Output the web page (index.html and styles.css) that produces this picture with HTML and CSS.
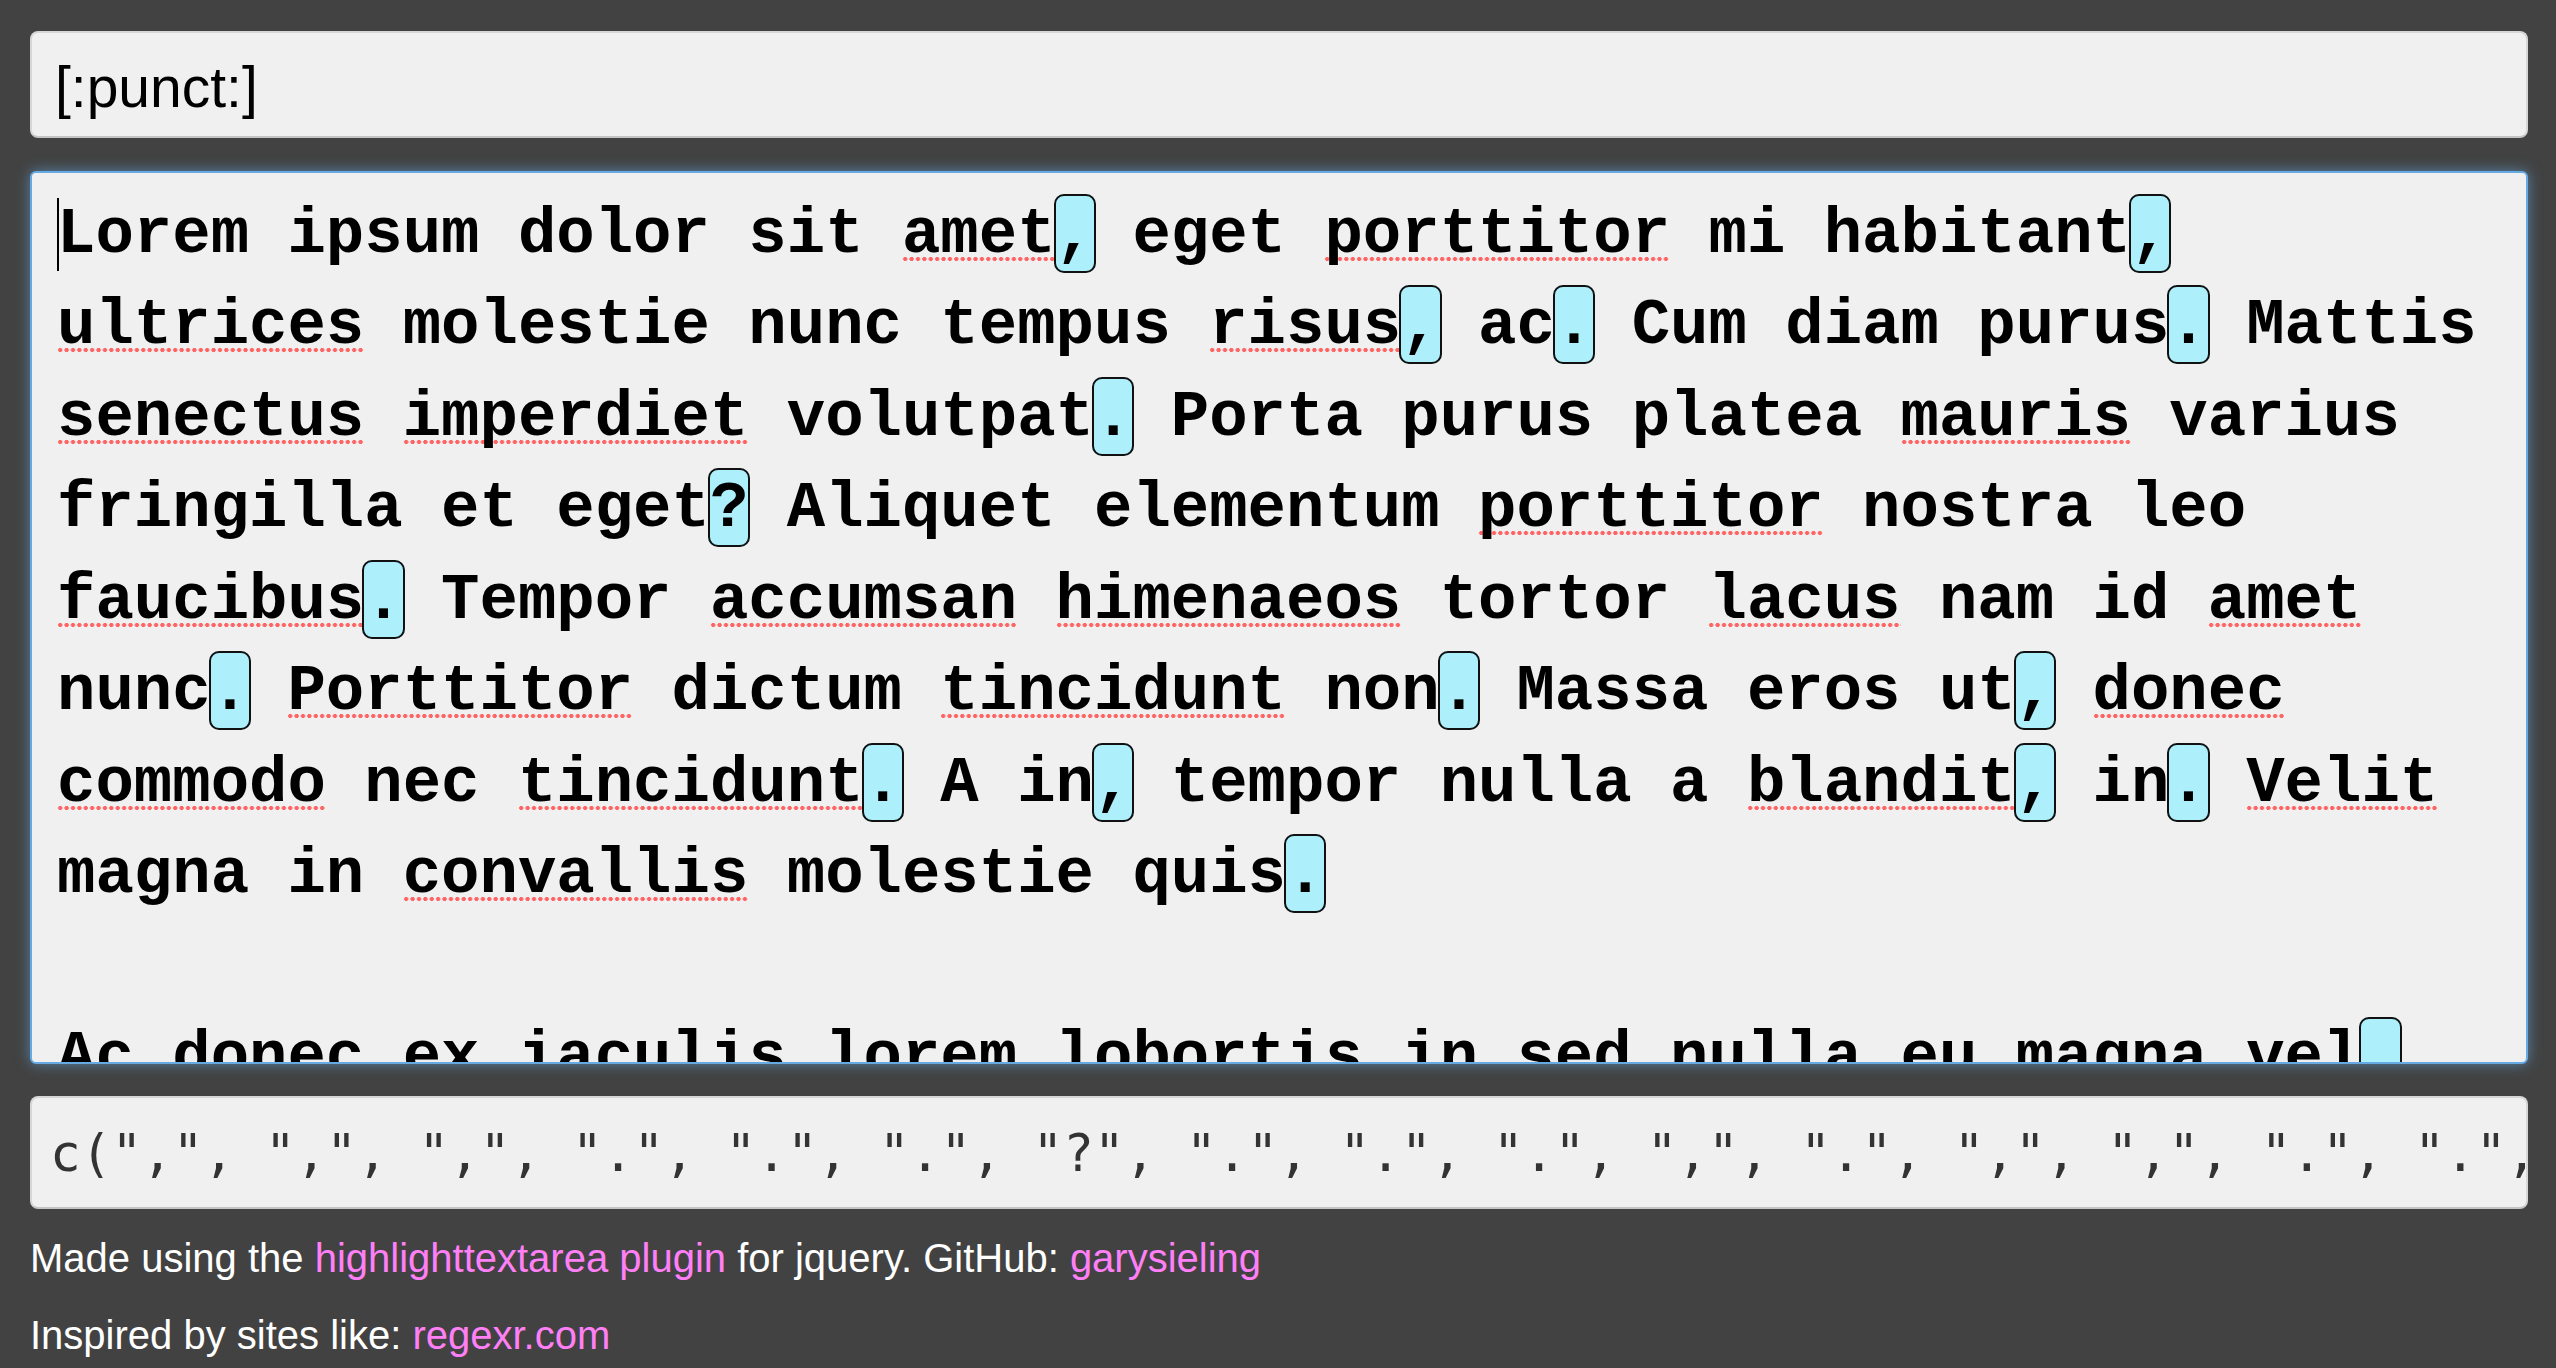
FILE: index.html
```html
<!DOCTYPE html>
<html lang="en">
<head>
<meta charset="utf-8">
<title>Regex tester</title>
<link rel="stylesheet" href="styles.css">
</head>
<body>
<div class="page">
  <div class="pattern">[:punct:]</div>
  <div class="editor"><span class="caret"></span>Lorem ipsum dolor sit <span class="sp">amet</span><mark class="hl">,</mark> eget <span class="sp">porttitor</span> mi habitant<mark class="hl">,</mark> <span class="sp">ultrices</span> molestie nunc tempus <span class="sp">risus</span><mark class="hl">,</mark> ac<mark class="hl">.</mark> Cum diam purus<mark class="hl">.</mark> Mattis <span class="sp">senectus</span> <span class="sp">imperdiet</span> volutpat<mark class="hl">.</mark> Porta purus platea <span class="sp">mauris</span> varius fringilla et eget<mark class="hl">?</mark> Aliquet elementum <span class="sp">porttitor</span> nostra leo <span class="sp">faucibus</span><mark class="hl">.</mark> Tempor <span class="sp">accumsan</span> <span class="sp">himenaeos</span> tortor <span class="sp">lacus</span> nam id <span class="sp">amet</span> nunc<mark class="hl">.</mark> <span class="sp">Porttitor</span> dictum <span class="sp">tincidunt</span> non<mark class="hl">.</mark> Massa eros ut<mark class="hl">,</mark> <span class="sp">donec</span> <span class="sp">commodo</span> nec <span class="sp">tincidunt</span><mark class="hl">.</mark> A in<mark class="hl">,</mark> tempor nulla a <span class="sp">blandit</span><mark class="hl">,</mark> in<mark class="hl">.</mark> <span class="sp">Velit</span> magna in <span class="sp">convallis</span> molestie quis<mark class="hl">.</mark><br><br>Ac donec ex iaculis lorem lobortis in sed nulla eu magna vel<mark class="hl">.</mark> Nisi tellus aliquam orci<mark class="hl">,</mark> sed a vitae.</div>
  <div class="output">c(",", ",", ",", ".", ".", ".", "?", ".", ".", ".", ",", ".", ",", ",", ".", ".", ".", ",", ".")</div>
  <p class="note">Made using the <a href="#">highlighttextarea plugin</a> for jquery. GitHub: <a href="#">garysieling</a></p>
  <p class="note note-second">Inspired by sites like: <a href="#">regexr.com</a></p>
</div>
</body>
</html>
```
FILE: styles.css
```css
html, body {
  margin: 0;
  padding: 0;
}

body {
  background: #424242;
  font-family: "Liberation Sans", Arial, sans-serif;
}

.page {
  display: flex;
  flex-direction: column;
  padding: 31px 28px 0 30px;
}

.pattern {
  box-sizing: border-box;
  height: 107px;
  display: flex;
  align-items: center;
  padding: 4px 23px 0;
  background: #f0f0f0;
  border: 2px solid #d6d6d6;
  border-bottom-color: #c4c4c4;
  border-radius: 8px;
  font-size: 57px;
  color: #000;
}

.editor {
  box-sizing: border-box;
  margin-top: 33px;
  height: 893px;
  padding: 17px 25px 0 25px;
  overflow: hidden;
  background: #f0f0f0;
  border: 2px solid #67a9e3;
  border-radius: 6px;
  box-shadow: 0 0 14px rgba(102, 175, 233, 0.6);
  font-family: "Liberation Mono", "Courier New", monospace;
  font-size: 64px;
  font-weight: bold;
  line-height: 91.43px;
  color: #000;
  white-space: normal;
}

.caret {
  display: inline-block;
  width: 2px;
  height: 73px;
  margin-right: -2px;
  vertical-align: -19px;
  background: #000;
}

.hl {
  background: #aeeffc;
  color: #000;
  border: 2px solid #111;
  border-radius: 10px;
  margin: 0 -2px;
  padding: 3px 0 0;
}

.sp {
  background-image: radial-gradient(circle at center, #ff6464 0, #ff6464 1.8px, rgba(255, 100, 100, 0) 2.4px);
  background-size: 6.4px 6px;
  background-repeat: repeat-x;
  background-position: 0 calc(100% - 9px);
}

.output {
  margin-top: 32px;
  padding: 26px 18px 24px;
  overflow: hidden;
  white-space: pre;
  background: #f0f0f0;
  border: 2px solid #d6d6d6;
  border-bottom-color: #c4c4c4;
  border-radius: 8px;
  font-family: "DejaVu Sans Mono", Menlo, monospace;
  font-size: 51px;
  line-height: normal;
  color: #333;
}

.note {
  margin: 27px 0 0;
  font-size: 40px;
  line-height: normal;
  color: #fff;
}

.note-second {
  margin-top: 32px;
}

.note a {
  color: #ff80f6;
  text-decoration: none;
}
```
